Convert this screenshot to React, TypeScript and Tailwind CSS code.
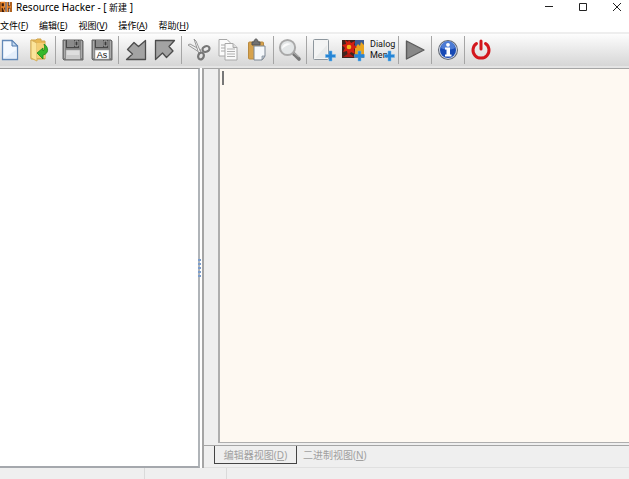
import React from 'react';

const NewFileIcon = () => (
  <svg width="18" height="22" viewBox="0 0 18 22">
    <path d="M1.5 1.5h9.5l5.5 5.5v13.5h-15z" fill="#f4f9ff" stroke="#6289b8" strokeWidth="1.3" />
    <path d="M11 1.5v5.5h5.5z" fill="#c4daf2" stroke="#4f78ab" strokeLinejoin="round" />
    <path d="M3 19h12V11z" fill="#dceafa" opacity=".7" />
  </svg>
);

const OpenIcon = () => (
  <svg width="20" height="24" viewBox="0 0 20 24">
    <path d="M2 2h5l1-1h4v2h4v18H2z" fill="#e8b954" stroke="#cfa34a" />
    <path d="M2 2l6 3v18l-6-3z" fill="#fbe49a" stroke="#d6ae57" />
    <path d="M8 5h8v15H8z" fill="#f4cf76" />
    <path d="M15 6c5 3 5 10-1 11v4l-6-6 6-5v3c2-1 2-4 1-7z" fill="#35b82c" stroke="#188818" strokeWidth=".8" />
  </svg>
);

const SaveIcon = ({ as = false }: { as?: boolean }) => (
  <svg width="22" height="22" viewBox="0 0 22 22">
    <path d="M1 1h19l1 1v19H2l-1-1z" fill="#808080" stroke="#666" />
    <path d="M4 1h13v8H4z" fill="#484848" />
    <path d="M5 1h7v7H5z" fill="#8b8b8b" />
    <path d="M13 2h3v5h-3z" fill="#3a3a3a" stroke="#c5c5c5" strokeWidth=".8" />
    <path d="M2.5 2v17M19.5 2v17" stroke="#aaa" />
    <path d="M4 11h14v9H4z" fill={as ? '#fff' : '#dedede'} stroke="#aaa" strokeWidth=".6" />
    {!as && <path d="M4 16h14v4H4z" fill="#cbcbcb" />}
    {as && <text x="11" y="19" textAnchor="middle" fontSize="9" fontFamily="Liberation Sans, sans-serif" fill="#111">As</text>}
  </svg>
);

const ImportIcon = () => (
  <svg width="22" height="22" viewBox="0 0 22 22">
    <path d="M20.5 1.5v19H1.5l6-5.5-5-4.5L9 3.5l4.5 4z" fill="#a3a3a3" stroke="#4c4c4c" strokeWidth="1.3" strokeLinejoin="round" />
  </svg>
);

const ExportIcon = () => (
  <svg width="22" height="22" viewBox="0 0 22 22">
    <path d="M1.500 1.500h19l-5.500 6 4 4.500-6.500 6.500-4-4.500-7 6.500z" fill="#a3a3a3" stroke="#4c4c4c" strokeWidth="1.3" strokeLinejoin="round" />
  </svg>
);

const CutIcon = () => (
  <svg width="26" height="24" viewBox="0 0 26 24" fill="none">
    <path d="M2 7l2-1 11 6-2 2z" fill="#eee" stroke="#909090" strokeWidth=".9" />
    <path d="M8 1l2 2 5 12-2 1z" fill="#fafafa" stroke="#909090" strokeWidth=".9" />
    <ellipse cx="20" cy="11" rx="3.6" ry="2.8" transform="rotate(-22 20 11)" stroke="#777" strokeWidth="2.2" />
    <ellipse cx="15" cy="18" rx="2.8" ry="3.4" transform="rotate(20 15 18)" stroke="#777" strokeWidth="2.2" />
  </svg>
);

const CopyIcon = () => (
  <svg width="22" height="24" viewBox="0 0 22 24" stroke="#a8a8a8">
    <path d="M2 1.5h8l3 3V18H2z" fill="#fbfbfb" />
    <path d="M4 7h4M4 10h4M4 13h4" />
    <path d="M8 5.5h8l4 4V22H8z" fill="#f9f9f9" />
    <path d="M16 5.5v4h4" fill="#ddd" />
    <path d="M10 11h8M10 13.5h8M10 16h8M10 18.5h8" strokeWidth=".9" />
  </svg>
);

const PasteIcon = () => (
  <svg width="20" height="24" viewBox="0 0 20 24">
    <rect x="1.5" y="4" width="15" height="17" rx="1" fill="#d6a24d" stroke="#b98a40" />
    <path d="M5 7V4h2c0-4 4-4 4 0h2v3z" fill="#717171" stroke="#555" />
    <path d="M7 8h11v10l-3 4H7z" fill="#f5f8fb" stroke="#7d8794" />
    <path d="M15 22v-4h3z" fill="#c0cad6" stroke="#7d8794" strokeWidth=".7" />
  </svg>
);

const FindIcon = () => (
  <svg width="24" height="24" viewBox="0 0 24 24">
    <path d="M16 16l5 5" stroke="#777" strokeWidth="3.6" strokeLinecap="round" />
    <path d="M16 15l5 4" stroke="#aaa" strokeWidth="1.2" />
    <circle cx="9.5" cy="9.5" r="7.6" fill="#e3e6e7" stroke="#a9a9a9" strokeWidth="2" />
    <path d="M4 11c0-5 5-7 9-5-4 1-7 3-9 5z" fill="#fbfbfb" />
  </svg>
);

const Plus = () => (
  <path d="M17 13h3v3.5h3.5v3H20V23h-3v-3.5h-3.5v-3H17z" fill="#2785d5" stroke="#6fb7eb" strokeWidth=".5" />
);

const AddItemIcon = () => (
  <svg width="24" height="24" viewBox="0 0 24 24">
    <rect x="1.5" y="1.5" width="15" height="20" rx="1" fill="#f3f4f4" stroke="#8d969d" />
    <path d="M3 20L15 7v13z" fill="#e8eaea" />
    <Plus />
  </svg>
);

const AddImageIcon = () => (
  <svg width="24" height="24" viewBox="0 0 24 24">
    <path d="M1 2h22v18H1z" fill="#40251e" />
    <path d="M14 2h9v9h-9z" fill="#3e5c92" />
    <path d="M14 10l3-4 2 2 1-4 3 3v9h-9z" fill="#e9a41e" />
    <path d="M8 2l2 3 4-2-1 4 3 2-3 2 1 5-4-2-3 4-1-5-4 1 2-4-3-3 4-1-1-4 3 2z" fill="#d31f12" />
    <circle cx="8" cy="9" r="2.3" fill="#f0b71c" />
    <path d="M2 19l6-4 5 4z" fill="#b01a12" />
    <Plus />
  </svg>
);

const AddDialogIcon = () => (
  <svg width="28" height="24" viewBox="0 0 28 24">
    <g fontFamily="Roboto, sans-serif" fontSize="9" fill="#111">
      <text x="2" y="9">Dialog</text>
      <text x="2" y="20">Men</text>
    </g>
    <g transform="translate(3 0)"><Plus /></g>
  </svg>
);

const RunIcon = () => (
  <svg width="22" height="22" viewBox="0 0 22 22">
    <path d="M2.5 2v18L20 11z" fill="#888" stroke="#5c5c5c" strokeWidth="1.4" strokeLinejoin="round" />
  </svg>
);

const InfoIcon = () => (
  <svg width="22" height="22" viewBox="0 0 22 22">
    <circle cx="11" cy="11" r="10" fill="#606773" />
    <circle cx="11" cy="11" r="9" fill="#cdd6e7" />
    <circle cx="11" cy="11" r="8" fill="#1749b4" />
    <path d="M4 9a7 7 0 0 1 14 0c-4 2-10 2-14 0z" fill="#4c7bd5" />
    <circle cx="11" cy="5.8" r="1.9" fill="#fff" />
    <path d="M8 8.500h5v7h1.500v2H8v-2h1.500v-5H8z" fill="#fff" />
  </svg>
);

const PowerIcon = () => (
  <svg width="22" height="22" viewBox="0 0 22 22" fill="none" stroke="#d3161d" strokeLinecap="round">
    <path d="M6.5 4.5a8 8 0 1 0 9 0" strokeWidth="3" />
    <path d="M11 2v8" strokeWidth="3" />
  </svg>
);

interface Tool {
  label: string;
  icon: React.ReactNode;
}

const toolGroups: Tool[][] = [
  [{ label: '新建', icon: <NewFileIcon /> }, { label: '打开', icon: <OpenIcon /> }],
  [{ label: '保存', icon: <SaveIcon /> }, { label: '另存为', icon: <SaveIcon as /> }],
  [{ label: '导入', icon: <ImportIcon /> }, { label: '导出', icon: <ExportIcon /> }],
  [{ label: '剪切', icon: <CutIcon /> }, { label: '复制', icon: <CopyIcon /> }, { label: '粘贴', icon: <PasteIcon /> }],
  [{ label: '查找', icon: <FindIcon /> }],
  [{ label: '添加资源', icon: <AddItemIcon /> }, { label: '添加图像', icon: <AddImageIcon /> }, { label: '添加对话框', icon: <AddDialogIcon /> }],
  [{ label: '编译', icon: <RunIcon /> }],
  [{ label: '关于', icon: <InfoIcon /> }],
  [{ label: '退出', icon: <PowerIcon /> }],
];

const menus = [
  ['文件', 'F'],
  ['编辑', 'E'],
  ['视图', 'V'],
  ['操作', 'A'],
  ['帮助', 'H'],
];

const TitleBar = () => (
  <header className="flex h-[14px] items-center justify-between">
    <div className="flex items-center gap-1">
      <svg width="12" height="12" viewBox="0 0 12 12" fill="none">
        <path d="M0 1h12v10H0z" fill="#3a1a0c" />
        <path d="M1 11V1.500h3.500V6H1M3 6l2 5M7.500 1v10M11 1v10M7.500 6H11" stroke="#f08a2c" strokeWidth="1.3" />
        <path d="M6 0v12" stroke="#fff" strokeWidth=".8" />
        <path d="M9.300 0v4.500M9.300 7.500V12" stroke="#fff" strokeWidth=".9" />
      </svg>
      <h1 className="text-[10px] leading-[14px] whitespace-pre">
        Resource Hacker - [ <span className="text-[9px]">新建</span> ]
      </h1>
    </div>
    <div className="flex gap-6 pr-[7px]">
      <button aria-label="最小化" className="flex h-3 w-[10px] items-center justify-center">
        <svg width="8" height="8" viewBox="0 0 8 8" stroke="#222"><path d="M0 3.5h8" /></svg>
      </button>
      <button aria-label="最大化" className="flex h-3 w-[10px] items-center justify-center">
        <svg width="8" height="8" viewBox="0 0 8 8" stroke="#222" fill="none"><path d="M.5.5h7v7h-7z" /></svg>
      </button>
      <button aria-label="关闭" className="flex h-3 w-[10px] items-center justify-center">
        <svg width="8" height="8" viewBox="0 0 8 8" stroke="#222"><path d="M0 0l8 8M8 0L0 8" /></svg>
      </button>
    </div>
  </header>
);

const Toolbar = () => (
  <div role="toolbar" className="flex h-9 items-stretch overflow-hidden border-t-2 border-b-2 border-t-[#eeeeee] border-b-[#e4e4e4] bg-linear-to-b from-[#fdfdfd] to-[#d6d6d6]">
    <div className="-ml-[5px] flex">
      {toolGroups.map((group, i) => (
        <div key={i} className="flex">
          {i > 0 && <span className="mx-[2px] my-[2px] w-px bg-[#a5a5a5]" />}
          {group.map(tool => (
            <button
              key={tool.label}
              aria-label={tool.label}
              className={`flex items-center justify-center pb-px ${group.length === 1 ? 'w-7' : 'w-[29px]'}`}
            >
              {tool.icon}
            </button>
          ))}
        </div>
      ))}
    </div>
  </div>
);

const App: React.FC = () => {
  return (
    <div className="flex h-screen flex-col overflow-hidden bg-white font-['Noto_Sans','Noto_Sans_CJK_SC',sans-serif] text-black">
      <TitleBar />
      <nav className="flex h-[18px] items-center gap-[11px] pt-[6px] text-[9px] leading-3">
        {menus.map(([name, key]) => (
          <button key={key} className="whitespace-nowrap">
            {name}(<u>{key}</u>)
          </button>
        ))}
      </nav>
      <Toolbar />

      <main className="flex min-h-0 flex-1 bg-[#efefef]">
        <aside className="w-[200px] shrink-0 border-t border-r-2 border-b-2 border-t-[#999] border-r-[#b0b4b8] border-b-[#a5a8ad] bg-white" />
        <div className="relative w-[2px] bg-white">
          <div className="absolute top-1/2 -left-[2px] flex -translate-y-1/2 flex-col gap-[2px]">
            {[0, 1, 2, 3, 4].map(dot => <span key={dot} className="h-[2px] w-[3px] bg-[#7b9dcc]" />)}
          </div>
        </div>

        <section className="flex min-w-0 flex-1 flex-col border-t border-l-2 border-[#a5a5a5]">
          <div className="flex min-h-0 flex-1 border-b border-[#a5a5a5]">
            <div className="w-[14px] shrink-0" />
            <div className="relative mb-[2px] flex min-w-0 flex-1 border-b border-l-2 border-[#aeaeae] bg-[#fef9f2]">
              <textarea
                aria-label="编辑器"
                spellCheck={false}
                className="min-w-0 flex-1 resize-none p-[2px] font-['Liberation_Mono',monospace] text-xs leading-4 outline-none"
              />
              <span className="absolute top-[2px] left-[2px] h-[14px] w-[2px] bg-[#777]" />
            </div>
          </div>
          <div role="tablist" className="flex h-[22px] items-start border-b border-[#e0e0e0] pl-[10px] text-[10px] leading-[14px] text-[#a0a0a0]">
            <button role="tab" aria-selected="true" className="h-[18px] w-[83px] border-x border-b border-[#444]">
              编辑器视图(<u>D</u>)
            </button>
            <button role="tab" aria-selected="false" className="h-[18px] px-[6px]">
              二进制视图(<u>N</u>)
            </button>
          </div>
        </section>
      </main>

      <footer className="flex h-[11px] shrink-0 bg-[#efefef]">
        <div className="w-[145px] border-r border-[#dadada]" />
        <div className="w-[82px] border-r border-[#dadada]" />
      </footer>
    </div>
  );
};

export default App;
